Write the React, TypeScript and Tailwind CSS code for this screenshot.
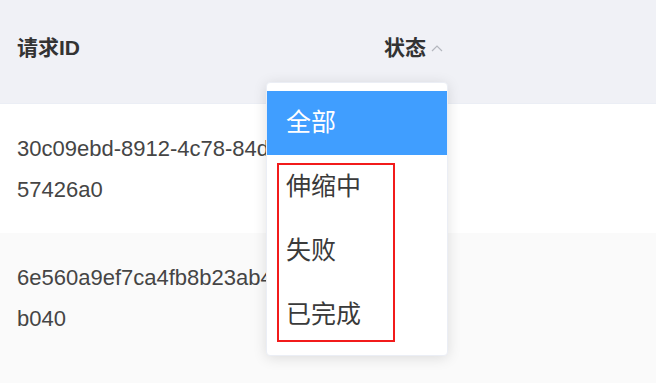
const rows = [
  { lines: ['30c09ebd-8912-4c78-84d2-3f1e9', '57426a0'], bg: 'bg-white' },
  { lines: ['6e560a9ef7ca4fb8b23ab4c91d7e', 'b040'], bg: 'bg-[#fafafa]' },
]

const options = ['全部', '伸缩中', '失败', '已完成']

function CaretUp() {
  return (
    <svg width="12" height="8" viewBox="0 0 12 8" className="ml-[5px]">
      <polyline points="1,7 6,2 11,7" fill="none" stroke="#b4b7be" strokeWidth="1.2" />
    </svg>
  )
}

export default function App() {
  return (
    <div
      className="relative h-[383px] w-[656px] overflow-hidden bg-white"
      style={{ fontFamily: '"Liberation Sans", "Noto Sans CJK SC", sans-serif' }}
    >
      {/* header */}
      <div className="flex h-[104px] items-center border-b border-[#ebeef5] bg-[#f0f1f6] pb-[8px] text-[21px] font-bold text-[#333]">
        <div className="w-[384px] shrink-0 pl-[17px]">请求ID</div>
        <div className="flex items-center">
          <span>状态</span>
          <CaretUp />
        </div>
      </div>

      {/* rows */}
      {rows.map((r, i) => (
        <div key={i} className={`flex h-[129px] items-center ${r.bg}`}>
          <div className="w-[384px] shrink-0 overflow-hidden whitespace-nowrap pl-[17px] text-[22px] leading-[41px] text-[#454545]">
            {r.lines.map((l) => (
              <div key={l}>{l}</div>
            ))}
          </div>
        </div>
      ))}
      <div className="h-[30px] bg-[#fafafa]" />

      {/* filter dropdown */}
      <div className="absolute left-[266px] top-[82px] w-[182px] rounded-[4px] border border-[#ebeef5] bg-white py-[8px] shadow-[0_2px_14px_0_rgba(0,0,0,0.12)]">
        {options.map((o, i) => (
          <div
            key={o}
            className={`flex h-[64px] items-center pl-[19px] text-[25px] ${
              i === 0 ? 'bg-[#409eff] text-white' : 'text-[#3a3a3a]'
            }`}
          >
            {o}
          </div>
        ))}
        <div className="pointer-events-none absolute left-[10px] top-[80px] h-[179px] w-[118px] border-2 border-[#f21b1b]" />
      </div>
    </div>
  )
}
